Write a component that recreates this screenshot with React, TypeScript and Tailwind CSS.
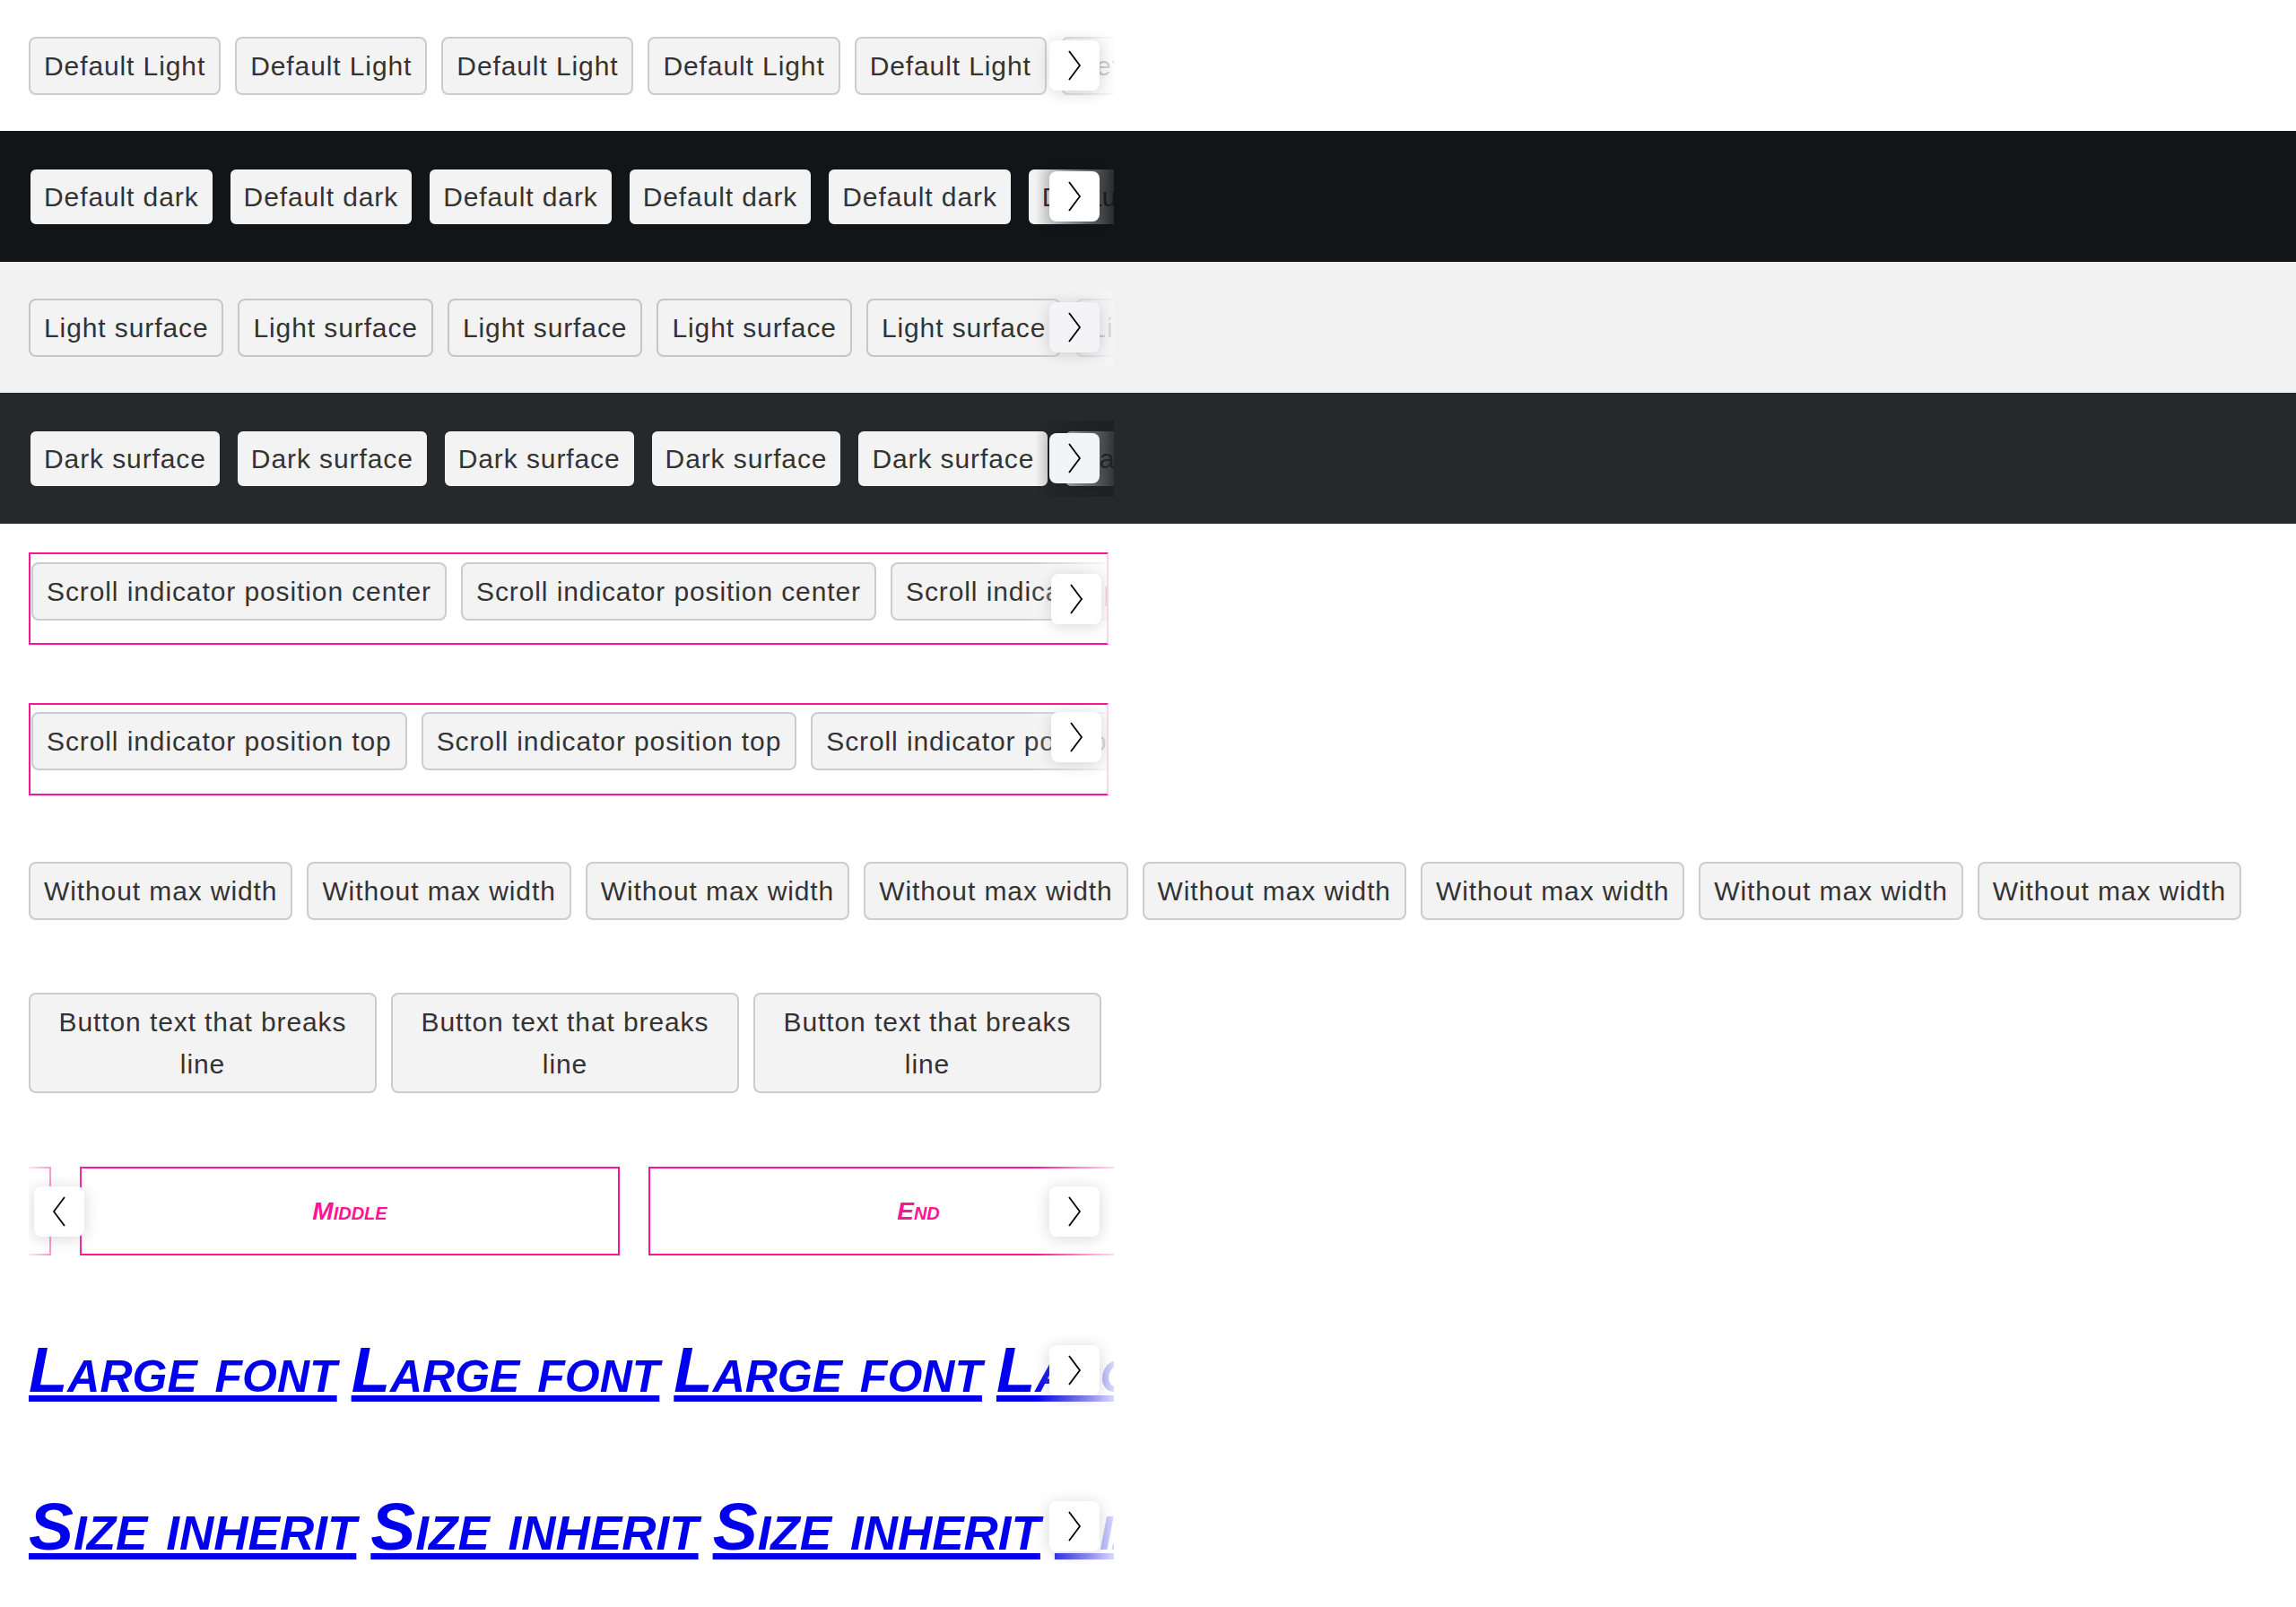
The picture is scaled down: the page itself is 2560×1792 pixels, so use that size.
import React from "react";

type Tone = {
  band: string;
  btn: string;
  fade: string;
  nav: string;
};

const tones: Record<string, Tone> = {
  light: {
    band: "bg-white",
    btn: "border-[#cccccc] bg-[#f3f3f3]",
    fade: "bg-linear-to-r from-white/0 to-white/85",
    nav: "bg-white",
  },
  dark: {
    band: "bg-[#111518]",
    btn: "border-[#111518] bg-[#f3f3f3]",
    fade: "bg-linear-to-r from-[#111518]/0 to-[#111518]/90",
    nav: "bg-white",
  },
  lightSurface: {
    band: "bg-[#f2f2f2]",
    btn: "border-[#c6c6c6] bg-[#f3f3f3]",
    fade: "bg-linear-to-r from-[#f2f2f2]/0 to-[#f5f5f7]/90",
    nav: "bg-[#f4f4f6]",
  },
  darkSurface: {
    band: "bg-[#25292c]",
    btn: "border-[#25292c] bg-[#f3f3f3]",
    fade: "bg-linear-to-r from-[#25292c]/0 to-[#1d2023]/90",
    nav: "bg-[#f3f4f6]",
  },
};

const btnBase =
  "shrink-0 whitespace-nowrap rounded-[8px] border-2 px-[15px] py-[7px] text-[30px] leading-[47px] tracking-[0.9px] text-[#333333]";

function Chevron({ dir = "right" }: { dir?: "left" | "right" }) {
  return (
    <svg width="16" height="34" viewBox="0 0 16 34" fill="none" stroke="currentColor" strokeWidth="1.8">
      <path d={dir === "right" ? "M2 1 L14 17 L2 33" : "M14 1 L2 17 L14 33"} />
    </svg>
  );
}

function NavButton({ dir = "right", bg = "bg-white" }: { dir?: "left" | "right"; bg?: string }) {
  return (
    <div
      className={`flex h-[56px] w-[56px] shrink-0 items-center justify-center rounded-[8px] text-black shadow-[0_2px_18px_rgba(0,0,0,0.16)] ${bg}`}
    >
      <Chevron dir={dir} />
    </div>
  );
}

// right-hand scroll indicator: gradient + chevron button
function RightFade({ fade, nav, layout }: { fade: string; nav: string; layout: string }) {
  return (
    <div className={`absolute inset-y-0 right-0 flex w-[88px] justify-end ${layout} ${fade}`}>
      <NavButton bg={nav} />
    </div>
  );
}

function Band({ tone, label }: { tone: Tone; label: string }) {
  return (
    <section className={`flex h-[146px] items-center pl-[32px] ${tone.band}`}>
      <div className="relative w-[1210px] overflow-hidden py-[10px]">
        <div className="flex gap-4">
          {Array.from({ length: 8 }).map((_, i) => (
            <button key={i} className={`${btnBase} ${tone.btn}`}>
              {label}
            </button>
          ))}
        </div>
        <RightFade fade={tone.fade} nav={tone.nav} layout="items-center pr-[16px]" />
      </div>
    </section>
  );
}

function PinkScroller({
  label,
  className,
  padding,
  navLayout,
}: {
  label: string;
  className: string;
  padding: string;
  navLayout: string;
}) {
  return (
    <div
      className={`ml-[32px] w-[1204px] border-2 border-[#ff1493] border-r-[#fdd3e8] ${className}`}
    >
      <div className={`relative overflow-hidden ${padding}`}>
        <div className="flex gap-4 pl-[1px]">
          {Array.from({ length: 4 }).map((_, i) => (
            <button key={i} className={`${btnBase} ${tones.light.btn}`}>
              {label}
            </button>
          ))}
        </div>
        <RightFade fade={tones.light.fade} nav="bg-white" layout={navLayout} />
      </div>
    </div>
  );
}

function LinkRow({ label, size, className }: { label: string; size: string; className: string }) {
  return (
    <div className={`relative ml-[32px] w-[1210px] overflow-hidden ${className}`}>
      <div className="flex gap-4">
        {Array.from({ length: 6 }).map((_, i) => (
          <a
            key={i}
            href="#"
            className={`shrink-0 whitespace-nowrap font-bold italic leading-[normal] text-[#0000ee] underline [font-variant:small-caps] ${size}`}
          >
            {label}
          </a>
        ))}
      </div>
      <RightFade fade={tones.light.fade} nav="bg-white" layout="items-center pr-[16px]" />
    </div>
  );
}

export default function App() {
  return (
    <div className="min-h-[1792px] w-[2560px] bg-white pb-[40px] font-['Liberation_Sans',Arial,sans-serif] text-[#333333]">
      <Band tone={tones.light} label="Default Light" />
      <Band tone={tones.dark} label="Default dark" />
      <Band tone={tones.lightSurface} label="Light surface" />
      <Band tone={tones.darkSurface} label="Dark surface" />

      <PinkScroller
        className="mt-[32px]"
        label="Scroll indicator position center"
        padding="pt-[9px] pb-[25px]"
        navLayout="items-center pr-[6px]"
      />
      <PinkScroller
        className="mt-[65px]"
        label="Scroll indicator position top"
        padding="pt-[8px] pb-[26px]"
        navLayout="items-start pt-[8px] pr-[6px]"
      />

      {/* without max width: nothing clipped */}
      <div className="mt-[74px] flex gap-4 pl-[32px]">
        {Array.from({ length: 8 }).map((_, i) => (
          <button key={i} className={`${btnBase} ${tones.light.btn}`}>
            Without max width
          </button>
        ))}
      </div>

      {/* wrapping labels */}
      <div className="mt-[81px] flex gap-4 pl-[32px]">
        {Array.from({ length: 3 }).map((_, i) => (
          <button
            key={i}
            className="w-[388px] shrink-0 rounded-[8px] border-2 border-[#cccccc] bg-[#f3f3f3] px-[15px] py-[7px] text-center text-[30px] leading-[47px] tracking-[0.9px] text-[#333333]"
          >
            Button text that breaks line
          </button>
        ))}
      </div>

      {/* scrolled to the middle item */}
      <div className="relative ml-[32px] mt-[82px] w-[1210px] overflow-hidden">
        <div className="ml-[-577px] flex gap-[32px]">
          {["Start", "Middle", "End"].map((t) => (
            <div
              key={t}
              className="flex h-[99px] w-[602px] shrink-0 items-center justify-center border-2 border-[#ff1493] text-[28px] font-bold italic text-[#ff1493] [font-variant:small-caps]"
            >
              {t}
            </div>
          ))}
        </div>
        <div className="absolute inset-y-0 left-0 flex w-[64px] items-center bg-linear-to-r from-white/90 to-white/0 pl-[6px]">
          <NavButton dir="left" />
        </div>
        <RightFade fade={tones.light.fade} nav="bg-white" layout="items-center pr-[16px]" />
      </div>

      <LinkRow label="Large font" size="text-[71px]" className="mt-[87px]" />
      <LinkRow label="Size inherit" size="text-[75px]" className="mt-[91px]" />
    </div>
  );
}
